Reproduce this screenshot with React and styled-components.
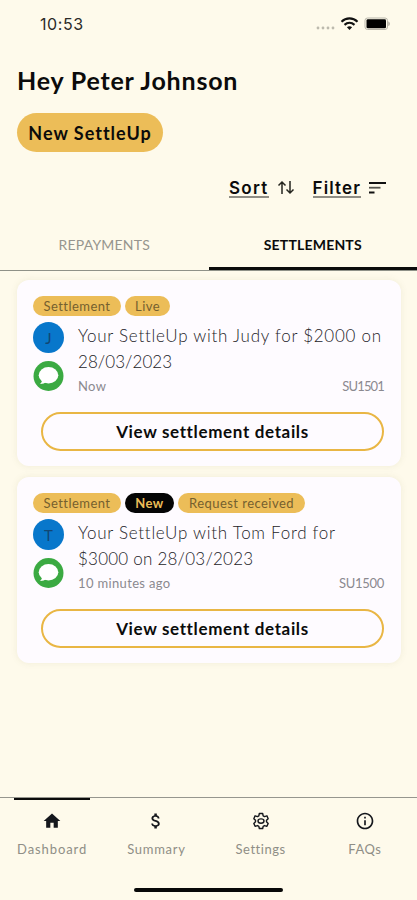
import React, { useState } from "react";
import styled, { createGlobalStyle } from "styled-components";
import { MdHome, MdAttachMoney, MdInfoOutline } from "react-icons/md";

const GlobalStyle = createGlobalStyle`
  * {
    box-sizing: border-box;
  }

  body {
    margin: 0;
    background: #fefaeb;
    font-family: Lato, "Liberation Sans", sans-serif;
    color: #0b0b0b;
  }

  button {
    font-family: inherit;
    color: inherit;
    cursor: pointer;
  }
`;

const Screen = styled.div`
  width: 100%;
  height: 900px;
  display: flex;
  flex-direction: column;
  overflow: hidden;
`;

const StatusBar = styled.div`
  height: 48px;
  padding: 0 27px 0 40px;
  display: flex;
  align-items: center;
  justify-content: space-between;
`;

const Time = styled.span`
  font-family: Inter, sans-serif;
  font-size: 16px;
  letter-spacing: 0.6px;
  color: #2b2b28;
`;

const StatusIcons = styled.div`
  display: flex;
  align-items: center;
`;

const Header = styled.header`
  height: 104px;
  padding: 15px 17px 0;
  display: flex;
  flex-direction: column;
  align-items: flex-start;
`;

const Title = styled.h1`
  margin: 0;
  height: 50px;
  font-size: 25px;
  line-height: 34px;
  font-weight: 700;
  letter-spacing: 0.8px;
  white-space: nowrap;
`;

const NewButton = styled.button`
  width: 146px;
  height: 39px;
  padding: 0;
  border: none;
  border-radius: 20px;
  background: #ecbd58;
  font-size: 18px;
  font-weight: 700;
  letter-spacing: 1px;
  white-space: nowrap;
`;

const Toolbar = styled.div`
  height: 70px;
  padding: 1px 31px 0 0;
  display: flex;
  align-items: center;
  justify-content: flex-end;
`;

const ToolLink = styled.button`
  height: 20px;
  padding: 0;
  border: none;
  border-bottom: 2px solid #8f8d84;
  background: none;
  font-family: Inter, sans-serif;
  font-size: 17px;
  line-height: 20px;
  font-weight: 600;
  letter-spacing: ${({ $spacing }) => $spacing}px;
  white-space: nowrap;
`;

const SortIcon = styled.svg`
  margin: 0 18px 0 8px;
`;

const FilterIcon = styled.svg`
  margin-left: 8px;
`;

const Tabs = styled.div`
  height: 49px;
  display: flex;
  border-bottom: 1px solid #8f9188;
`;

const Tab = styled.button`
  flex: 1;
  height: 48px;
  padding: 0;
  border: none;
  border-bottom: 3px solid ${({ $active }) => ($active ? "#0b0b0b" : "transparent")};
  background: none;
  font-size: 14px;
  font-weight: ${({ $active }) => ($active ? 700 : 400)};
  letter-spacing: 0.2px;
  color: ${({ $active }) => ($active ? "#0b0b0b" : "#96958e")};
`;

const List = styled.main`
  flex: 1;
  padding: 9px 16px 0 17px;
  display: flex;
  flex-direction: column;
  gap: 11px;
`;

const Card = styled.article`
  height: 186px;
  padding: 16px 17px 0 16px;
  border-radius: 12px;
  background: #fefbff;
  box-shadow: 0 0 7px rgba(120, 120, 60, 0.1);
`;

const Tags = styled.div`
  display: flex;
  gap: 4px;
  height: 26px;
`;

const Tag = styled.span`
  width: ${({ $width }) => $width}px;
  height: 20px;
  border-radius: 10px;
  background: ${({ $dark }) => ($dark ? "#050505" : "#ecbd58")};
  color: ${({ $dark }) => ($dark ? "#ecbd58" : "#75602f")};
  font-size: 13px;
  line-height: 21px;
  font-weight: ${({ $dark }) => ($dark ? 700 : 400)};
  letter-spacing: 0.45px;
  text-align: center;
  white-space: nowrap;
`;

const Body = styled.div`
  height: 90px;
  display: flex;
`;

const Avatars = styled.div`
  flex: 0 0 45px;
  display: flex;
  flex-direction: column;
  gap: 8px;
`;

const Avatar = styled.div`
  width: 31px;
  height: 31px;
  border-radius: 50%;
  background: #0877cb;
  color: #124673;
  font-size: 15px;
  line-height: 32px;
  text-align: center;
`;

const Details = styled.div`
  flex: 1;
  min-width: 0;
`;

const Message = styled.p`
  margin: 0;
  height: 55px;
  padding-top: 1px;
  font-size: 17px;
  line-height: 26px;
  font-weight: 300;
  color: #242328;
`;

const Line = styled.span`
  display: block;
  letter-spacing: ${({ $spacing }) => $spacing}px;
  white-space: nowrap;
`;

const Meta = styled.div`
  display: flex;
  justify-content: space-between;
  font-size: 13px;
  line-height: 18px;
  letter-spacing: 0.35px;
  color: #8b898f;
`;

const Reference = styled.span`
  letter-spacing: ${({ $spacing }) => $spacing}px;
`;

const ViewButton = styled.button`
  display: block;
  width: 343px;
  height: 39px;
  margin-left: 8px;
  padding: 0;
  border: 2px solid #e9b644;
  border-radius: 20px;
  background: transparent;
  font-size: 17px;
  font-weight: 700;
  letter-spacing: 0.65px;
`;

const Nav = styled.nav`
  height: 103px;
  border-top: 1px solid #96968e;
  display: grid;
  grid-template-columns: repeat(4, 1fr);
  grid-template-rows: 90px 4px;
`;

const NavItem = styled.button`
  padding: 0;
  border: none;
  background: none;
  display: flex;
  flex-direction: column;
  align-items: center;
  font-size: 13px;
  line-height: 18px;
  letter-spacing: ${({ $spacing }) => $spacing}px;
  color: #8f8e86;

  &::before {
    content: "";
    width: 76px;
    height: 2px;
    background: ${({ $active }) => ($active ? "#0b0b0b" : "transparent")};
  }

  svg {
    margin: 11px 0 9px;
    color: #15171c;
  }
`;

const HomeIndicator = styled.div`
  grid-column: 1 / -1;
  justify-self: center;
  width: 149px;
  height: 4px;
  border-radius: 2px;
  background: #080808;
`;

const settlements = [
  {
    id: "SU1501",
    idSpacing: -0.85,
    initial: "J",
    lines: [
      { text: "Your SettleUp with Judy for $2000 on", spacing: 0.74 },
      { text: "28/03/2023", spacing: 0.05 },
    ],
    time: "Now",
    tags: [
      { label: "Settlement", width: 88 },
      { label: "Live", width: 45 },
    ],
  },
  {
    id: "SU1500",
    idSpacing: -0.3,
    initial: "T",
    lines: [
      { text: "Your SettleUp with Tom Ford for", spacing: 0.72 },
      { text: "$3000 on 28/03/2023", spacing: 0.23 },
    ],
    time: "10 minutes ago",
    tags: [
      { label: "Settlement", width: 88 },
      { label: "New", width: 49, dark: true },
      { label: "Request received", width: 127 },
    ],
  },
];

function GearIcon() {
  return (
    <svg width="20" height="20" viewBox="0 0 24 24" fill="none" stroke="currentColor" strokeWidth="1.7" strokeLinejoin="round">
      <path d="M10 3h4l.6 2.8 1.6.9 2.9-.9 1.5 3.4-2 2v1.800l2 2-1.500 3.400-2.900-.9-1.600.9L14 21h-4l-.6-2.600-1.600-.9-2.900.9L3.400 15l2-2v-1.800l-2-2 1.500-3.400 2.900.9 1.600-.9z" />
      <ellipse cx="12" cy="12" rx="3.6" ry="2.6" />
    </svg>
  );
}

const navItems = [
  { label: "Dashboard", spacing: 0.9, icon: <MdHome size={20} /> },
  { label: "Summary", spacing: 0.7, icon: <MdAttachMoney size={20} /> },
  { label: "Settings", spacing: 0.55, icon: <GearIcon /> },
  { label: "FAQs", spacing: 0.5, icon: <MdInfoOutline size={20} /> },
];

function StatusGlyphs() {
  return (
    <StatusIcons>
      <svg width="75" height="16" viewBox="0 0 75 16">
        <g fill="#bdbaae">
          <circle cx="3" cy="12" r="1.4" />
          <circle cx="8" cy="12" r="1.4" />
          <circle cx="13" cy="12" r="1.4" />
          <circle cx="18" cy="12" r="1.4" />
        </g>
        <g fill="none" stroke="#111" strokeWidth="2.1">
          <path d="M26.5 5.700c4.500-4.400 11.500-4.400 16 0" />
          <path d="M29.5 8.900c3-2.700 7-2.700 10 0" />
        </g>
        <path d="M31.9 11.200c1.600-1.400 3.600-1.400 5.200 0l-2.600 2.700z" fill="#111" />
        <rect x="50" y="2" width="22.5" height="11.5" rx="2.5" fill="none" stroke="#b9b6aa" />
        <rect x="51.5" y="3.3" width="19.5" height="9" rx="1.3" fill="#000" />
        <path d="M73.3 5.500c2 .6 2 4 0 4.600z" fill="#aaa79c" />
      </svg>
    </StatusIcons>
  );
}

function ChatIcon() {
  return (
    <svg width="31" height="30" viewBox="0 0 31 30">
      <circle cx="15.5" cy="15" r="15" fill="#3baa42" />
      <ellipse cx="15.5" cy="14.3" rx="9.8" ry="8.2" fill="#fff" />
      <path d="M9 18.500c.2 1.900-.5 3.300-2 4.500 2.600.1 4.700-.7 6.200-2z" fill="#fff" />
    </svg>
  );
}

function SettlementCard({ item }) {
  return (
    <Card>
      <Tags>
        {item.tags.map((tag) => (
          <Tag key={tag.label} $width={tag.width} $dark={tag.dark}>
            {tag.label}
          </Tag>
        ))}
      </Tags>
      <Body>
        <Avatars>
          <Avatar>{item.initial}</Avatar>
          <ChatIcon />
        </Avatars>
        <Details>
          <Message>
            {item.lines.map((line) => (
              <Line key={line.text} $spacing={line.spacing}>
                {line.text}
              </Line>
            ))}
          </Message>
          <Meta>
            <span>{item.time}</span>
            <Reference $spacing={item.idSpacing}>{item.id}</Reference>
          </Meta>
        </Details>
      </Body>
      <ViewButton>View settlement details</ViewButton>
    </Card>
  );
}

export default function App() {
  const [tab, setTab] = useState("SETTLEMENTS");
  const [page, setPage] = useState("Dashboard");

  return (
    <>
      <GlobalStyle />
      <Screen>
        <StatusBar>
          <Time>10:53</Time>
          <StatusGlyphs />
        </StatusBar>

        <Header>
          <Title>Hey Peter Johnson</Title>
          <NewButton>New SettleUp</NewButton>
        </Header>

        <Toolbar>
          <ToolLink $spacing={1.3}>Sort</ToolLink>
          <SortIcon width="18" height="16" viewBox="0 0 18 16" fill="none" stroke="#25251f" strokeWidth="1.5">
            <path d="M5 14V2M1.5 5.500L5 2l3.500 3.500M13 1v12M9.500 9.500L13 13l3.500-3.500" />
          </SortIcon>
          <ToolLink $spacing={1.1}>Filter</ToolLink>
          <FilterIcon width="17" height="14" viewBox="0 0 17 14" fill="none" strokeWidth="1.8">
            <path d="M0 2h17M0 11.500h5.500" stroke="#111" />
            <path d="M0 6.700h11.500" stroke="#55544e" />
          </FilterIcon>
        </Toolbar>

        <Tabs>
          {["REPAYMENTS", "SETTLEMENTS"].map((name) => (
            <Tab key={name} $active={tab === name} onClick={() => setTab(name)}>
              {name}
            </Tab>
          ))}
        </Tabs>

        <List>
          {settlements.map((item) => (
            <SettlementCard key={item.id} item={item} />
          ))}
        </List>

        <Nav>
          {navItems.map(({ label, spacing, icon }) => (
            <NavItem key={label} $spacing={spacing} $active={page === label} onClick={() => setPage(label)}>
              {icon}
              {label}
            </NavItem>
          ))}
          <HomeIndicator />
        </Nav>
      </Screen>
    </>
  );
}
